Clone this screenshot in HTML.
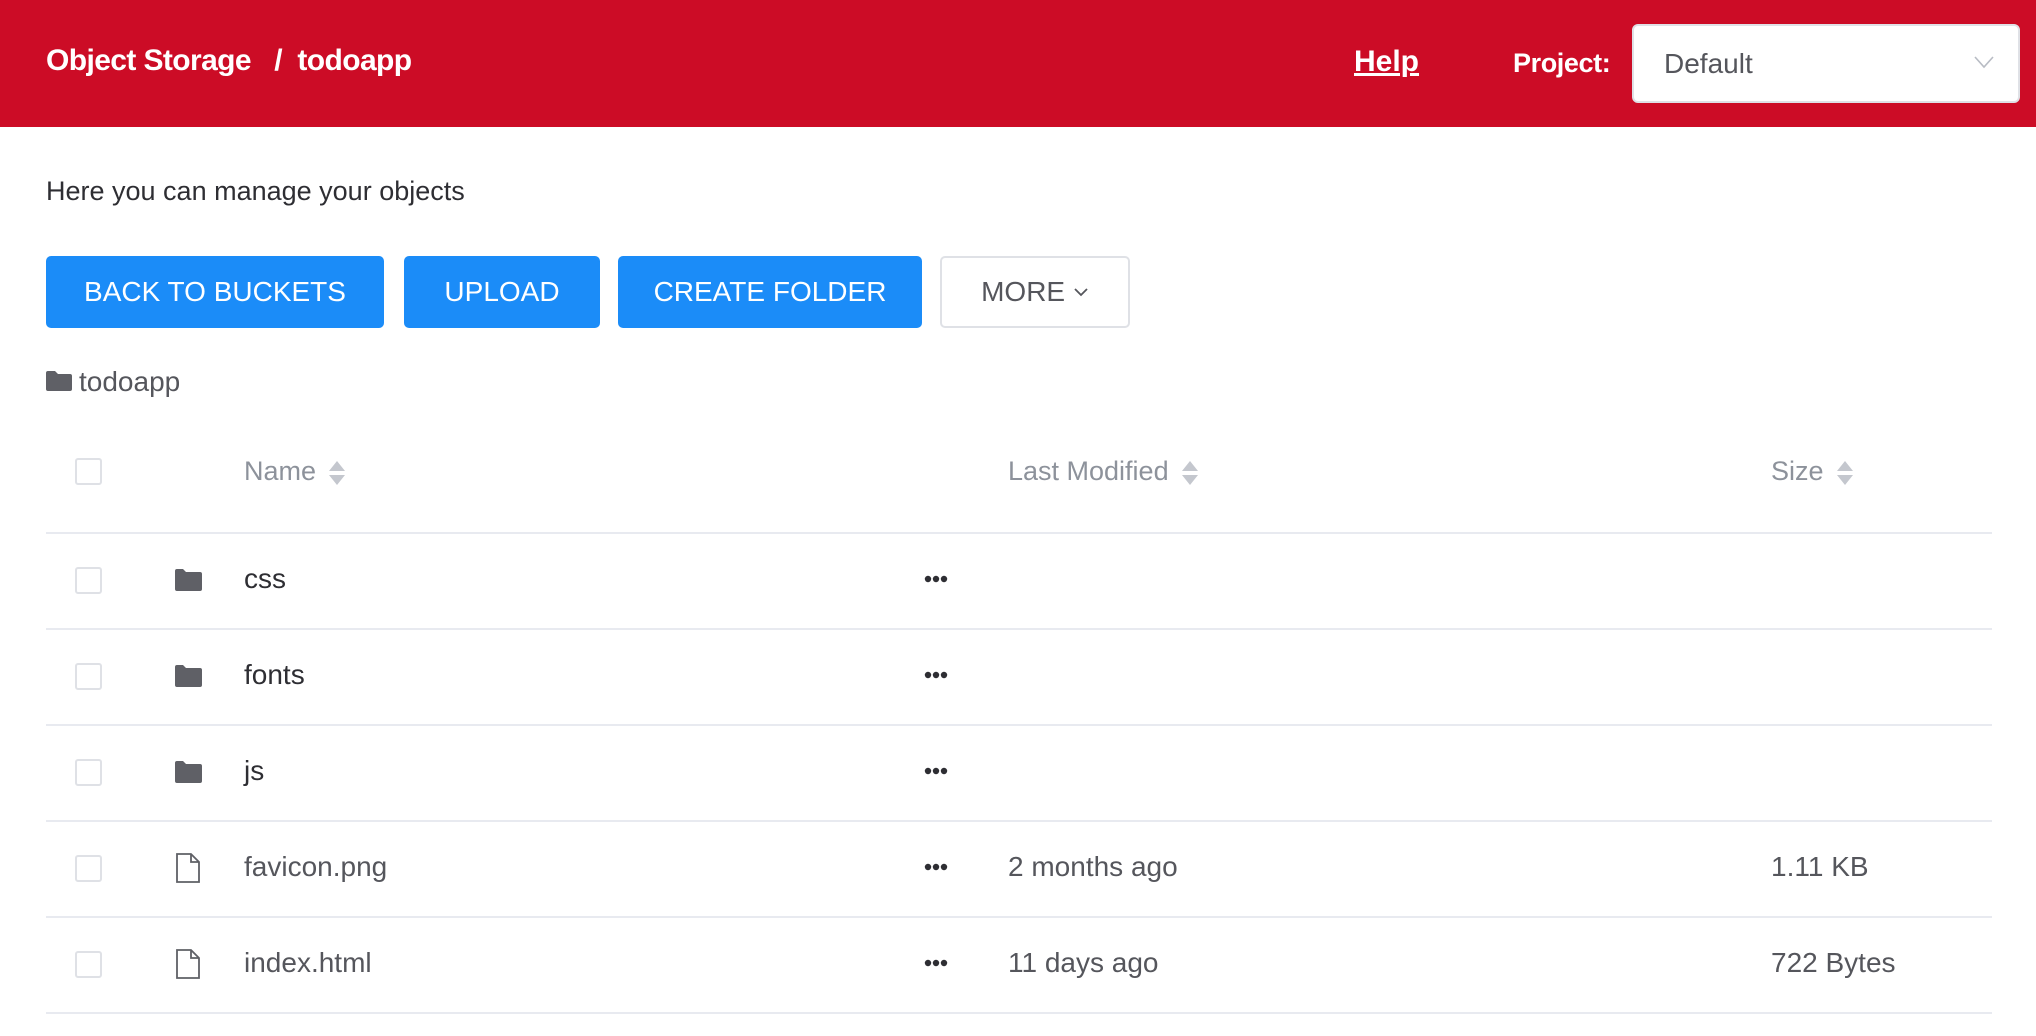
<!DOCTYPE html>
<html><head><meta charset="utf-8"><style>
*{margin:0;padding:0;box-sizing:border-box}
body{width:2036px;height:1036px;overflow:hidden;background:#fff;font-family:"Liberation Sans",sans-serif;color:#2e2e33;position:relative}
.hdr{position:absolute;left:0;top:0;width:2036px;height:127px;background:#cc0c26;color:#fff}
.abs{position:absolute;white-space:nowrap}
.btn{position:absolute;top:256px;height:72px;border-radius:5px;background:#1b8cf8;color:#fff;font-size:28px;display:flex;align-items:center;justify-content:center}
.cb{position:absolute;left:75px;width:27px;height:27px;border:2px solid #dfe1e6;border-radius:3px;background:#fff}
.line{position:absolute;left:46px;width:1946px;height:2px;background:#e8eaf0}
.row{font-size:28px;color:#2e2e33}
.th{font-size:27px;color:#8d929b}
.sort{display:inline-block;vertical-align:middle;margin-left:12px}
</style></head><body>
<div class="hdr">
 <div class="abs" style="left:46px;top:44px;font-size:30px;font-weight:bold;letter-spacing:-0.6px">Object Storage&nbsp;&nbsp;&nbsp;/&nbsp;&nbsp;todoapp</div>
 <div class="abs" style="left:1354px;top:45px;font-size:30px;font-weight:bold;text-decoration:underline">Help</div>
 <div class="abs" style="left:1513px;top:48px;font-size:27px;font-weight:bold;letter-spacing:-0.4px">Project:</div>
 <div class="abs" style="left:1632px;top:24px;width:388px;height:79px;background:#fff;border:2px solid #dfe1e6;border-radius:6px">
  <div class="abs" style="left:30px;top:22px;font-size:28px;color:#55565c">Default</div>
  <svg class="abs" style="left:339px;top:28px" width="22" height="16" viewBox="0 0 22 16"><path d="M2 3l9 10 9-10" fill="none" stroke="#b8bcc4" stroke-width="1.6"/></svg>
 </div>
</div>
<div class="abs" style="left:46px;top:176px;font-size:27px;color:#2e2e33">Here you can manage your objects</div>
<div class="btn" style="left:46px;width:338px">BACK TO BUCKETS</div>
<div class="btn" style="left:404px;width:196px">UPLOAD</div>
<div class="btn" style="left:618px;width:304px">CREATE FOLDER</div>
<div class="btn" style="left:940px;width:190px;background:#fff;border:2px solid #dfe1e6;color:#55565c">MORE&nbsp;<svg width="16" height="12" viewBox="0 0 16 12"><path d="M2 3l6 6 6-6" fill="none" stroke="#55565c" stroke-width="1.8"/></svg></div>
<svg class="abs" style="left:46px;top:370px" width="26" height="22" viewBox="0 0 26 22"><path d="M0 3a2 2 0 0 1 2-2h7l3 3h12a2 2 0 0 1 2 2v13a2 2 0 0 1-2 2H2a2 2 0 0 1-2-2z" fill="#5f6066"/></svg>
<div class="abs" style="left:79px;top:366px;font-size:28px;color:#55565c">todoapp</div>
<div class="cb" style="top:458px"></div>
<div class="abs th" style="left:244px;top:456px">Name<svg class="sort" width="18" height="26" viewBox="0 0 18 26"><path d="M9 1l8 10H1zM9 25l8-10H1z" fill="#c4c7ce"/></svg></div>
<div class="abs th" style="left:1008px;top:456px">Last Modified<svg class="sort" width="18" height="26" viewBox="0 0 18 26"><path d="M9 1l8 10H1zM9 25l8-10H1z" fill="#c4c7ce"/></svg></div>
<div class="abs th" style="left:1771px;top:456px">Size<svg class="sort" width="18" height="26" viewBox="0 0 18 26"><path d="M9 1l8 10H1zM9 25l8-10H1z" fill="#c4c7ce"/></svg></div>
<div class="line" style="top:532px"></div>
<div class="line" style="top:628px"></div>
<div class="line" style="top:724px"></div>
<div class="line" style="top:820px"></div>
<div class="line" style="top:916px"></div>
<div class="line" style="top:1012px"></div>

<div class="cb" style="top:567px"></div>
<svg class="abs" style="left:175px;top:568px" width="27" height="24" viewBox="0 0 27 24"><path d="M0 3a2 2 0 0 1 2-2h6l3 3h14a2 2 0 0 1 2 2v15a2 2 0 0 1-2 2H2a2 2 0 0 1-2-2z" fill="#5f6066"/></svg>
<div class="abs row" style="left:244px;top:563px">css</div>
<div class="cb" style="top:663px"></div>
<svg class="abs" style="left:175px;top:664px" width="27" height="24" viewBox="0 0 27 24"><path d="M0 3a2 2 0 0 1 2-2h6l3 3h14a2 2 0 0 1 2 2v15a2 2 0 0 1-2 2H2a2 2 0 0 1-2-2z" fill="#5f6066"/></svg>
<div class="abs row" style="left:244px;top:659px">fonts</div>
<div class="cb" style="top:759px"></div>
<svg class="abs" style="left:175px;top:760px" width="27" height="24" viewBox="0 0 27 24"><path d="M0 3a2 2 0 0 1 2-2h6l3 3h14a2 2 0 0 1 2 2v15a2 2 0 0 1-2 2H2a2 2 0 0 1-2-2z" fill="#5f6066"/></svg>
<div class="abs row" style="left:244px;top:755px">js</div>
<div class="cb" style="top:855px"></div>
<svg class="abs" style="left:175px;top:853px" width="26" height="30" viewBox="0 0 26 30"><path d="M2 1h14l8 8v20H2z M16 1v8h8" fill="none" stroke="#5f6066" stroke-width="1.8"/></svg>
<div class="abs row" style="left:244px;top:851px;color:#55565c">favicon.png</div>
<div class="abs row" style="left:1008px;top:851px;color:#55565c">2 months ago</div>
<div class="abs row" style="left:1771px;top:851px;color:#55565c">1.11 KB</div>
<div class="cb" style="top:951px"></div>
<svg class="abs" style="left:175px;top:949px" width="26" height="30" viewBox="0 0 26 30"><path d="M2 1h14l8 8v20H2z M16 1v8h8" fill="none" stroke="#5f6066" stroke-width="1.8"/></svg>
<div class="abs row" style="left:244px;top:947px;color:#55565c">index.html</div>
<div class="abs row" style="left:1008px;top:947px;color:#55565c">11 days ago</div>
<div class="abs row" style="left:1771px;top:947px;color:#55565c">722 Bytes</div>

<svg class="abs" style="left:924px;top:575px" width="24" height="8"><circle cx="4" cy="4" r="3.2" fill="#2e2e33"/><circle cx="12" cy="4" r="3.2" fill="#2e2e33"/><circle cx="20" cy="4" r="3.2" fill="#2e2e33"/></svg>
<svg class="abs" style="left:924px;top:671px" width="24" height="8"><circle cx="4" cy="4" r="3.2" fill="#2e2e33"/><circle cx="12" cy="4" r="3.2" fill="#2e2e33"/><circle cx="20" cy="4" r="3.2" fill="#2e2e33"/></svg>
<svg class="abs" style="left:924px;top:767px" width="24" height="8"><circle cx="4" cy="4" r="3.2" fill="#2e2e33"/><circle cx="12" cy="4" r="3.2" fill="#2e2e33"/><circle cx="20" cy="4" r="3.2" fill="#2e2e33"/></svg>
<svg class="abs" style="left:924px;top:863px" width="24" height="8"><circle cx="4" cy="4" r="3.2" fill="#2e2e33"/><circle cx="12" cy="4" r="3.2" fill="#2e2e33"/><circle cx="20" cy="4" r="3.2" fill="#2e2e33"/></svg>
<svg class="abs" style="left:924px;top:959px" width="24" height="8"><circle cx="4" cy="4" r="3.2" fill="#2e2e33"/><circle cx="12" cy="4" r="3.2" fill="#2e2e33"/><circle cx="20" cy="4" r="3.2" fill="#2e2e33"/></svg>
</body></html>
